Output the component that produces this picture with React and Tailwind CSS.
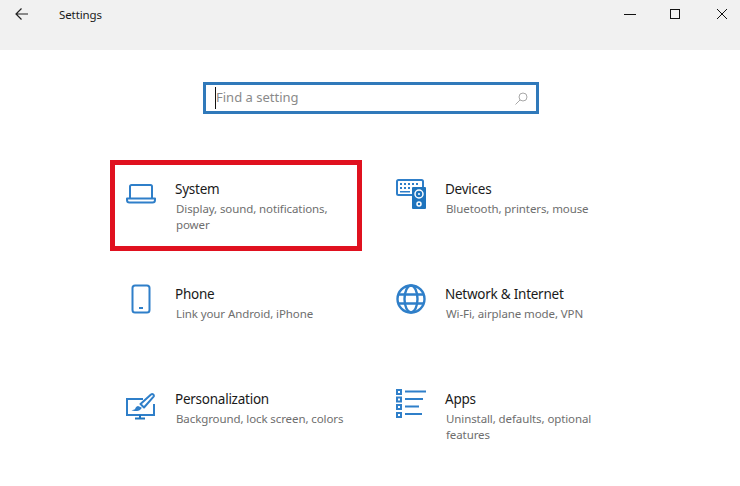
const font = { fontFamily: '"Noto Sans", "Open Sans", sans-serif' }

function LaptopIcon() {
  return (
    <svg width="30" height="20" viewBox="0 0 30 20" fill="none" stroke="#2f7fc9" strokeWidth="2">
      <path d="M4 14V2.500A1.500 1.500 0 0 1 5.500 1h19A1.500 1.500 0 0 1 26 2.500V14" />
      <path d="M1 14.500h28v1.500a2.500 2.500 0 0 1-2.500 2.500h-23A2.500 2.500 0 0 1 1 16z" strokeLinejoin="round" />
    </svg>
  )
}

function DevicesIcon() {
  return (
    <svg width="30" height="30" viewBox="0 0 30 30" fill="none">
      <path d="M16 16H2.500A1.500 1.500 0 0 1 1 14.500V2.500A1.500 1.500 0 0 1 2.500 1h23A1.500 1.500 0 0 1 27 2.500V8" stroke="#2f7fc9" strokeWidth="2" />
      <path d="M4 4h2v2H4zM8 4h2v2H8zM12 4h2v2h-2zM16 4h2v2h-2zM20 4h2v2h-2zM4 8h2v2H4zM8 8h2v2H8zM12 8h2v2h-2zM4 12h10v1.500H4z" fill="#2f7fc9" />
      <rect x="16" y="8" width="14" height="22" rx="1" fill="#1f74bd" />
      <circle cx="23" cy="15" r="4" fill="none" stroke="#fff" strokeWidth="1.500" />
      <circle cx="23" cy="15" r="1" fill="#fff" />
      <circle cx="23" cy="25" r="2" fill="none" stroke="#fff" strokeWidth="1.500" />
    </svg>
  )
}

function PhoneIcon() {
  return (
    <svg width="20" height="30" viewBox="0 0 20 30" fill="none">
      <rect x="1.500" y="1.500" width="17" height="27" rx="2.500" stroke="#2f7fc9" strokeWidth="2" />
      <rect x="8" y="23" width="4" height="2" fill="#2f7fc9" />
    </svg>
  )
}

function GlobeIcon() {
  return (
    <svg width="30" height="30" viewBox="0 0 30 30" fill="none" stroke="#2f7fc9" strokeWidth="2.400">
      <circle cx="15" cy="15" r="13.500" />
      <ellipse cx="15" cy="15" rx="6.500" ry="13.500" />
      <path d="M2 10.500h26M2 19.500h26" />
    </svg>
  )
}

function BrushIcon() {
  return (
    <svg className="mt-[4px]" width="30" height="27" viewBox="0 0 30 27" fill="none">
      <path d="M17 6H1v16h27V11" stroke="#2f7fc9" strokeWidth="2" />
      <path d="M9 25.500h10M14 22v3.500" stroke="#1f74bd" strokeWidth="2" />
      <path d="M14.500 11 25 1.500c1.500-1 3.200 0 2.800 1.800L18 14.500z" fill="none" stroke="#2f7fc9" strokeWidth="2" strokeLinejoin="round" />
      <path d="M12 13c-2 .5-2.500 2-3 3-.5.800-2 1-3.500 1 2 1.500 7 1.500 9-.5 1-1 1.500-1.500 1-2z" fill="#2f7fc9" />
    </svg>
  )
}

function AppsIcon() {
  return (
    <svg className="-mt-px" width="30" height="29" viewBox="0 0 30 29" fill="none">
      <path d="M0 0h6v6H0zM0 7.500h6v6H0zM0 15h6v6H0zM0 23h6v6H0z" fill="#2f7fc9" />
      <path d="M2 2h2v2H2zM2 9.500h2v2H2zM2 17h2v2H2zM2 25h2v2H2z" fill="#fff" />
      <path d="M9 2.500h21M9 10h18M9 17.500h14M9 25h17" stroke="#2f7fc9" strokeWidth="2" />
    </svg>
  )
}

const settings = [
  { title: 'System', desc: 'Display, sound, notifications, power', icon: <LaptopIcon />, marked: true },
  { title: 'Devices', desc: 'Bluetooth, printers, mouse', icon: <DevicesIcon /> },
  { title: 'Phone', desc: 'Link your Android, iPhone', icon: <PhoneIcon /> },
  { title: 'Network & Internet', desc: 'Wi-Fi, airplane mode, VPN', icon: <GlobeIcon /> },
  { title: 'Personalization', desc: 'Background, lock screen, colors', icon: <BrushIcon /> },
  { title: 'Apps', desc: 'Uninstall, defaults, optional features', icon: <AppsIcon /> },
]

function SettingCard({ item }) {
  return (
    <div className="relative flex h-[105px] pl-[16px] pt-[19px]">
      {/* Red annotation box */}
      {item.marked && <div className="absolute left-0 top-0 h-[91px] w-[252px] border-[5px] border-[#e0111f]" />}
      <div className="flex h-[30px] w-[30px] shrink-0 items-center justify-center">{item.icon}</div>
      <div className="ml-[19px] w-[170px] pt-px">
        <p className="text-[13.5px] leading-[19px] tracking-[-0.25px] text-[#1a1a1a]">{item.title}</p>
        <p className="ml-px mt-[2px] text-[11.5px] leading-[16px] tracking-[-0.1px] text-[#6e6e6e]">{item.desc}</p>
      </div>
    </div>
  )
}

export default function App() {
  return (
    <div className="h-[486px] w-[740px] overflow-hidden bg-white" style={font}>
      {/* Title bar */}
      <div className="flex h-[50px] items-start bg-[#f1f1f1] pt-[7px]">
        <svg className="ml-[15px] mt-[1px]" width="13" height="12" viewBox="0 0 13 12" fill="none" stroke="#222" strokeWidth="1.200">
          <path d="M13 6H1M6.500.5 1 6l5.500 5.500" />
        </svg>
        <span className="ml-[31px] text-[11.5px] leading-[16px] tracking-[-0.1px] text-[#1a1a1a]">Settings</span>
        <div className="ml-auto flex pt-[1px]">
          <svg width="12" height="12" viewBox="0 0 12 12" stroke="#111" strokeWidth="1">
            <path d="M0 6.500h12" />
          </svg>
          <svg className="ml-[33px]" width="12" height="12" viewBox="0 0 12 12" fill="none" stroke="#111" strokeWidth="1">
            <rect x="1.500" y="1.500" width="9" height="9" />
          </svg>
          <svg className="ml-[35px] mr-[12px]" width="12" height="12" viewBox="0 0 12 12" stroke="#111" strokeWidth="1">
            <path d="M1 1l10 10M11 1 1 11" />
          </svg>
        </div>
      </div>

      {/* Search */}
      <div className="ml-[203px] mt-[32px] flex h-[32px] w-[336px] items-center border-[3px] border-[#3079ba] pl-[9px] pr-[8px]">
        <span className="h-[22px] w-px bg-[#111]" />
        <span className="text-[13px] text-[#8a8a8a]">Find a setting</span>
        <svg className="ml-auto" width="13" height="13" viewBox="0 0 13 13" fill="none" stroke="#a8a8a8" strokeWidth="1">
          <circle cx="8" cy="5" r="4" />
          <path d="M5 8 .5 12.500" />
        </svg>
      </div>

      {/* Categories */}
      <div className="ml-[110px] mt-[46px] grid grid-cols-[270px_270px]">
        {settings.map((item) => (
          <SettingCard key={item.title} item={item} />
        ))}
      </div>
    </div>
  )
}
